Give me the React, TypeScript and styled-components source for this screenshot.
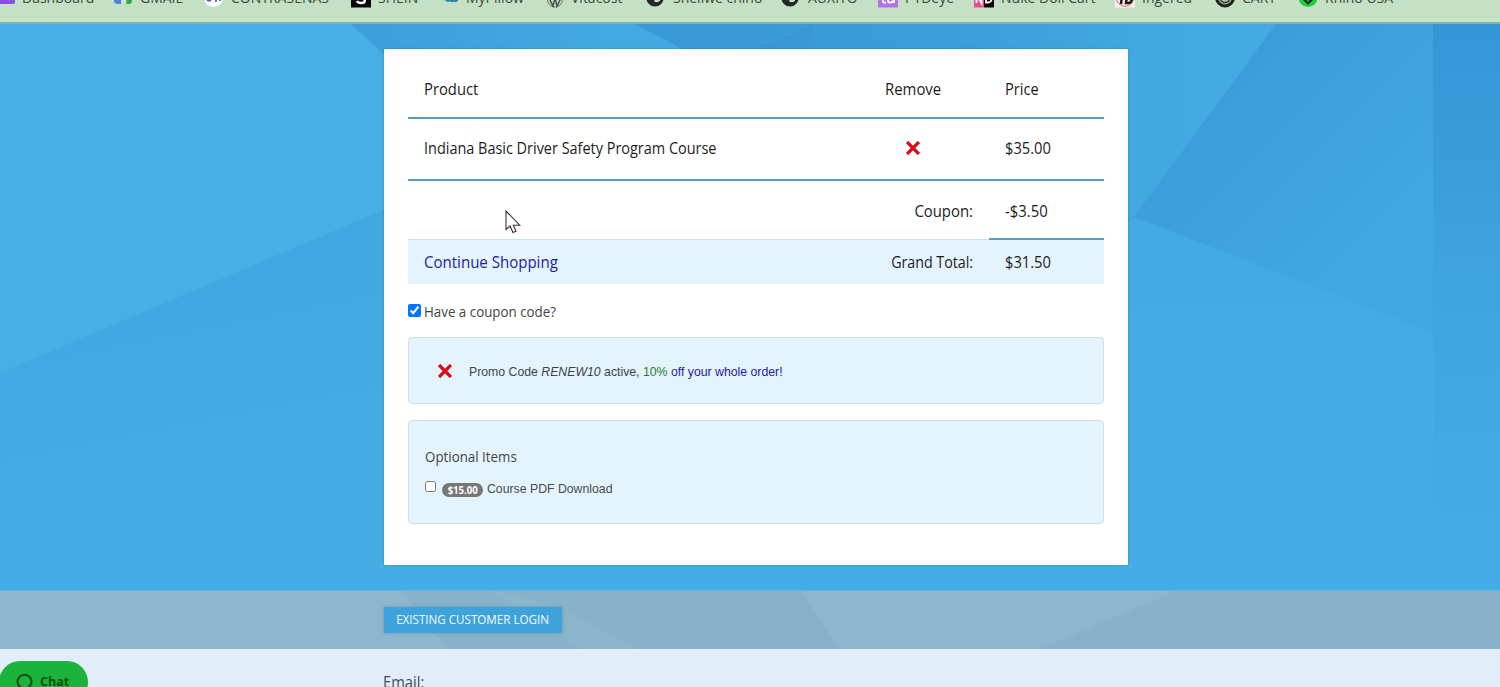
import React from "react";
import styled, { createGlobalStyle } from "styled-components";

const GlobalStyle = createGlobalStyle`
  * { box-sizing: border-box; }
  body {
    margin: 0;
    overflow: hidden;
    font-family: "Open Sans", "Noto Sans", sans-serif;
    color: #1c1c1c;
  }
`;

const Page = styled.div`
  position: relative;
  display: flex;
  flex-direction: column;
  height: 687px;
  overflow: hidden;
  background: #e1edf7;
`;

const Narrow = styled.span<{ $scale: number; $from?: "left" | "right" | "center" }>`
  display: inline-block;
  white-space: pre;
  transform: scaleX(${(p) => p.$scale});
  transform-origin: ${(p) => p.$from ?? "left"} center;
`;

const BookmarkBar = styled.nav`
  flex: none;
  height: 24px;
  overflow: hidden;
  background: linear-gradient(#c5e1c5 0 17px, #c1ddbd 17px 18px, #c6e3c3 18px);
  border-bottom: 2px solid #84b4a6;
`;

const BookmarkList = styled.div`
  display: flex;
  height: 20px;
  margin: -13px 0 0 -5px;
`;

const Bookmark = styled.a<{ $slot: number }>`
  flex: none;
  display: flex;
  gap: 7px;
  width: ${(p) => p.$slot}px;
  font-size: 14px;
  line-height: 21px;
  white-space: nowrap;
  color: #3a4a3c;

  svg { flex: none; overflow: visible; }
`;

const Hero = styled.section`
  position: relative;
  flex: none;
  display: flex;
  justify-content: center;
  height: 566px;
  padding: 25px 0 25px 12px;
`;

const Backdrop = styled.svg`
  position: absolute;
  inset: 0;
  width: 100%;
  height: 100%;
`;

const Card = styled.main`
  position: relative;
  width: 744px;
  height: 516px;
  padding: 10px 24px 0;
  background: #fff;
  box-shadow: 0 0 2px rgba(40, 120, 160, 0.7);
`;

const CartRow = styled.div<{ $height: number; $shift: number }>`
  display: grid;
  grid-template-columns: 461px 120px 115px;
  align-items: center;
  height: ${(p) => p.$height}px;
  padding-top: ${(p) => Math.max(p.$shift, 0)}px;
  padding-bottom: ${(p) => Math.max(-p.$shift, 0)}px;
  border-bottom: 2px solid #559fb8;
`;

const SummaryRow = styled.div<{ $height: number; $tinted?: boolean }>`
  display: grid;
  grid-template-columns: 1fr auto 115px;
  height: ${(p) => p.$height}px;
  background: ${(p) => (p.$tinted ? "#e4f4fd" : "#fff")};
  box-shadow: ${(p) => (p.$tinted ? "0 -1px #d3dfe4" : "none")};
`;

const Cell = styled.div<{ $ruled?: boolean }>`
  position: relative;
  display: flex;
  align-items: center;
  padding: 0 16px;
  font-size: 16px;
  line-height: 22px;
  white-space: nowrap;
  border-bottom: 2px solid ${(p) => (p.$ruled ? "#4ba0c6" : "transparent")};
`;

const TotalCell = styled(Cell)`
  padding-top: 2px;
`;

const RemoveButton = styled.button<{ $indent: number }>`
  display: flex;
  margin: 1px 0 0 ${(p) => p.$indent}px;
  padding: 0;
  border: 0;
  background: none;
`;

const ShopLink = styled.a`
  color: #2620a6;
`;

const CouponToggle = styled.label`
  display: flex;
  align-items: center;
  gap: 3px;
  margin: 16px 0 15px;
  height: 23px;
  font-size: 14.5px;
  line-height: 22px;
  color: #444;
`;

const Checkbox = styled.input<{ $size: number; $lift: number }>`
  flex: none;
  width: ${(p) => p.$size}px;
  height: ${(p) => p.$size}px;
  margin: 0 0 ${(p) => p.$lift}px;
`;

const Panel = styled.section<{ $height: number }>`
  height: ${(p) => p.$height}px;
  margin: -1px 0 17px;
  padding: 0 16px;
  background: #e4f4fd;
  border: 1px solid #cfdfe6;
  border-radius: 4px;
`;

const PromoLine = styled.div`
  display: flex;
  align-items: center;
  height: 100%;
  font: 13px/18px "Liberation Sans", Arial, sans-serif;
  color: #3c4448;
`;

const PromoText = styled.span`
  margin: 3px 0 0 17px;
`;

const Percent = styled.span`
  color: #1f7f2a;
`;

const Offer = styled.span`
  color: #2620a6;
`;

const OptionalTitle = styled.h2`
  margin: 25px 0 10px;
  font-size: 14.5px;
  line-height: 22px;
  font-weight: 400;
  color: #444;
`;

const OptionLine = styled.label`
  display: flex;
  align-items: center;
  height: 22px;
  font: 13px/18px "Liberation Sans", Arial, sans-serif;
  color: #454b4f;
`;

const PriceBadge = styled.span`
  display: flex;
  justify-content: center;
  margin: 2px 4px 0 6px;
  width: 41px;
  height: 14px;
  border-radius: 7px;
  background: #777;
  color: #fff;
  font: 700 10px/14px "Open Sans", sans-serif;
`;

const LoginBand = styled.section`
  position: relative;
  flex: none;
  height: 59px;
  padding: 17px 0 0 384px;
`;

const LoginButton = styled.button`
  position: relative;
  display: flex;
  align-items: center;
  justify-content: center;
  width: 178px;
  height: 26px;
  padding: 0 0 2px;
  border: 0;
  background: #3fa3db;
  box-shadow: 0 0 3px rgba(70, 130, 160, 0.6);
  color: #f4fbff;
  font-family: "Open Sans", sans-serif;
  font-size: 13px;
  font-weight: 500;
  white-space: nowrap;
`;

const LoginForm = styled.form`
  padding: 22px 0 0 383px;
  font-size: 16px;
  line-height: 22px;
  color: #444c54;
`;

const ChatButton = styled.button`
  position: absolute;
  left: -1px;
  top: 661px;
  display: flex;
  align-items: center;
  gap: 7px;
  width: 89px;
  height: 42px;
  padding: 0 0 1px 17px;
  border: 0;
  border-radius: 21px;
  background: #1bb33c;
  color: #07520f;
  font: 700 12.5px/18px "Open Sans", sans-serif;
`;

const Pointer = styled.svg`
  position: absolute;
  left: 505px;
  top: 210px;
`;

const CrossIcon = () => (
  <svg width="14" height="14" viewBox="0 0 14 14">
    <path d="M2.2 2.2 11.8 11.8M11.8 2.2 2.2 11.8" stroke="#d90b14" strokeWidth="3.3" strokeLinecap="square" />
  </svg>
);

const Globe = () => (
  <>
    <circle cx="9" cy="11" r="8.6" fill="#222b25" />
    <path d="M9 9c3 0 6 0 5.500 3s-3 3.500-5 3-1.500-2 0-2.500 1-2-.500-3.500z" fill="#c9e3c9" />
  </>
);

const bookmarks: { label: string; slot: number; icon: React.ReactNode }[] = [
  { label: "Dashboard", slot: 118, icon: <rect width="20" height="17" rx="2" fill="#8d4fe0" /> },
  {
    label: "GMAIL",
    slot: 91,
    icon: (
      <>
        <path d="M1 2h7v15H3.500L1 15z" fill="#4a82dd" />
        <path d="M8 5l3 6 2-4v5l-2 3-3-3z" fill="#e6eee6" />
        <path d="M13.500 2h5.500v13l-2 2h-3.500z" fill="#34a455" />
      </>
    ),
  },
  {
    label: "CONTRASENAS",
    slot: 147,
    icon: (
      <>
        <circle cx="9.500" cy="10.500" r="9.500" fill="#fff" />
        <circle cx="5" cy="12" r="2.800" fill="#5068c0" />
        <path d="M12 10v5M16 10v4" stroke="#5c7ac4" strokeWidth="2" />
      </>
    ),
  },
  {
    label: "SHEIN",
    slot: 88,
    icon: (
      <>
        <path d="M0 0h20v20.500H0z" fill="#050505" />
        <path d="M14 5c-5-3-9 3-4 5s5 6 0 6q-3 0-4-2" fill="none" stroke="#fff" strokeWidth="2.500" />
      </>
    ),
  },
  { label: "MyPillow", slot: 105, icon: <path d="M6 10h13v4q-2 2-4 .500-2 1.500-4 0-4 1-5-1.500z" fill="#2d83a8" /> },
  {
    label: "Vitacost",
    slot: 102,
    icon: (
      <>
        <circle cx="11" cy="12.500" r="7.500" fill="none" stroke="#66786a" />
        <path d="M5 11l4 8 2-8 2 8 4-8" fill="none" stroke="#435447" strokeWidth="1.500" />
      </>
    ),
  },
  { label: "Shellwe chino", slot: 135, icon: <Globe /> },
  { label: "AUXITO", slot: 97, icon: <Globe /> },
  {
    label: "PTDeye",
    slot: 96,
    icon: (
      <>
        <path d="M0 0h20v20.500H0z" fill="#b673e4" />
        <path d="M5 9v5q0 2 3 1.700" fill="none" stroke="#fff" strokeWidth="1.800" />
        <circle cx="12.500" cy="13" r="2.700" fill="none" stroke="#fff" strokeWidth="1.800" />
        <path d="M16 9v7" stroke="#fff" strokeWidth="1.800" />
      </>
    ),
  },
  {
    label: "Nuke Doll Cart",
    slot: 141,
    icon: (
      <>
        <path d="M0 0h10v20.500H0z" fill="#f2498e" />
        <path d="M10 0h10v20.500H10z" fill="#090609" />
        <path d="M2.500 16V8l5 8V8" fill="none" stroke="#fff" strokeWidth="1.800" />
        <path d="M12 8v7.500h2q4-.500 3.500-4" fill="none" stroke="#fff" strokeWidth="1.800" />
      </>
    ),
  },
  {
    label: "Ingered",
    slot: 100,
    icon: (
      <>
        <path d="M0 0h20v20.500H0z" fill="#f6efeb" />
        <circle cx="10" cy="10.500" r="8.800" fill="none" stroke="#d56460" />
        <path d="M7 9l-1 8M12 9l-1 7h3q3-1 3-5" fill="none" stroke="#1c1718" strokeWidth="2.500" />
      </>
    ),
  },
  {
    label: "CART",
    slot: 83,
    icon: (
      <>
        <circle cx="10" cy="10.500" r="8.500" fill="#9ba895" stroke="#20241f" strokeWidth="3" />
        <circle cx="10" cy="11" r="4.500" fill="#b9c7b3" stroke="#3b4039" strokeWidth="1.500" />
      </>
    ),
  },
  {
    label: "Rhino USA",
    slot: 100,
    icon: (
      <>
        <circle cx="10" cy="10.500" r="9.500" fill="#20cf3e" />
        <path d="M5 8h10v5l-5 5-5-5z" fill="#12351b" />
        <path d="M8 12l2 3 3-4z" fill="#6d9a78" />
      </>
    ),
  },
];

const HeroFacets = () => (
  <Backdrop viewBox="0 24 1500 566" preserveAspectRatio="none">
    <defs>
      <linearGradient id="lower" gradientUnits="userSpaceOnUse" x1="280" y1="230" x2="330" y2="480">
        <stop offset="0" stopColor="#40a7e1" />
        <stop offset="1" stopColor="#45ade5" />
      </linearGradient>
      <linearGradient id="upper" x1="0" x2="1" y1="0" y2="0">
        <stop offset="0" stopColor="#3d9edb" />
        <stop offset=".75" stopColor="#43a9e2" />
      </linearGradient>
      <linearGradient id="crown" gradientUnits="userSpaceOnUse" x1="640" x2="1210" y1="0" y2="0">
        <stop offset="0" stopColor="#3998d7" />
        <stop offset=".5" stopColor="#3b9dda" />
        <stop offset="1" stopColor="#43abe1" />
      </linearGradient>
      <linearGradient id="wing" gradientUnits="userSpaceOnUse" x1="1190" y1="90" x2="1350" y2="250">
        <stop offset="0" stopColor="#3b9cda" />
        <stop offset="1" stopColor="#40a7e0" />
      </linearGradient>
      <linearGradient id="edge" x1="0" x2="0" y1="0" y2="1">
        <stop offset="0" stopColor="#3596d5" />
        <stop offset=".5" stopColor="#3fa5df" />
        <stop offset="1" stopColor="#45ade5" />
      </linearGradient>
      <linearGradient id="base" x1="0" x2="0" y1="0" y2="1">
        <stop offset="0" stopColor="#40a6e0" />
        <stop offset=".65" stopColor="#44ade5" />
        <stop offset="1" stopColor="#45ade5" />
      </linearGradient>
    </defs>
    <rect y="24" width="1500" height="566" fill="url(#base)" />
    <path d="M0 24H400V203L0 373z" fill="#47afe5" />
    <path d="M0 373 400 203V590H0z" fill="url(#lower)" />
    <path d="M351 24H640L700 60H390z" fill="url(#upper)" />
    <path d="M635 24H1275L1136 216 1120 230V60H703z" fill="url(#crown)" />
    <path d="M760 49 815 24 807 49z" fill="#3696d4" opacity=".5" />
    <path d="M1276 24H1433V333L1134 217z" fill="url(#wing)" />
    <path d="M1433 24H1500V590H1433z" fill="url(#edge)" />
  </Backdrop>
);

const BandFacets = () => (
  <Backdrop viewBox="0 590 1500 59" preserveAspectRatio="none">
    <rect y="590" width="1500" height="59" fill="#8eb7cd" />
    <path d="M400 590H800L840 649H447z" fill="#87b2c9" />
    <path d="M490 590 560 607 638 649H580z" fill="#8bb5ca" />
    <path d="M1178 590H1500V649H1040z" fill="#87b2ca" />
    <path d="M0 590H1500" stroke="#75b4d8" strokeWidth="2" />
  </Backdrop>
);

export default function App() {
  return (
    <Page>
      <GlobalStyle />
      <BookmarkBar>
        <BookmarkList>
          {bookmarks.map((b) => (
            <Bookmark key={b.label} $slot={b.slot}>
              <svg width="20" height="20">{b.icon}</svg>
              {b.label}
            </Bookmark>
          ))}
        </BookmarkList>
      </BookmarkBar>

      <Hero>
        <HeroFacets />
        <Card>
          <CartRow $height={60} $shift={3}>
            <Cell><Narrow $scale={0.925}>Product</Narrow></Cell>
            <Cell><Narrow $scale={0.932}>Remove</Narrow></Cell>
            <Cell><Narrow $scale={0.918}>Price</Narrow></Cell>
          </CartRow>
          <CartRow $height={62} $shift={-1}>
            <Cell><Narrow $scale={0.903}>Indiana Basic Driver Safety Program Course</Narrow></Cell>
            <Cell>
              <RemoveButton $indent={21} aria-label="Remove course"><CrossIcon /></RemoveButton>
            </Cell>
            <Cell><Narrow $scale={0.918}>$35.00</Narrow></Cell>
          </CartRow>
          <SummaryRow $height={59}>
            <Cell />
            <TotalCell><Narrow $scale={0.93} $from="right">Coupon:</Narrow></TotalCell>
            <TotalCell $ruled><Narrow $scale={0.93}>-$3.50</Narrow></TotalCell>
          </SummaryRow>
          <SummaryRow $height={44} $tinted>
            <TotalCell><ShopLink><Narrow $scale={0.94}>Continue Shopping</Narrow></ShopLink></TotalCell>
            <TotalCell><Narrow $scale={0.89} $from="right">Grand Total:</Narrow></TotalCell>
            <TotalCell><Narrow $scale={0.918}>$31.50</Narrow></TotalCell>
          </SummaryRow>

          <CouponToggle>
            <Checkbox $size={13} $lift={3} type="checkbox" defaultChecked />
            <Narrow $scale={0.92}>Have a coupon code?</Narrow>
          </CouponToggle>

          <Panel $height={67}>
            <PromoLine>
              <RemoveButton $indent={13} aria-label="Remove promo code"><CrossIcon /></RemoveButton>
              <PromoText>
                <Narrow $scale={0.944}>
                  Promo Code <em>RENEW10</em> active, <Percent>10%</Percent> <Offer>off your whole order!</Offer>
                </Narrow>
              </PromoText>
            </PromoLine>
          </Panel>

          <Panel $height={104}>
            <OptionalTitle><Narrow $scale={0.92}>Optional Items</Narrow></OptionalTitle>
            <OptionLine>
              <Checkbox $size={11} $lift={5} type="checkbox" />
              <PriceBadge><Narrow $scale={0.96} $from="center">$15.00</Narrow></PriceBadge>
              <Narrow $scale={0.944}>Course PDF Download</Narrow>
            </OptionLine>
          </Panel>
        </Card>
      </Hero>

      <LoginBand>
        <BandFacets />
        <LoginButton><Narrow $scale={0.893} $from="center">EXISTING CUSTOMER LOGIN</Narrow></LoginButton>
      </LoginBand>
      <LoginForm>
        <label><Narrow $scale={0.92}>Email:</Narrow></label>
      </LoginForm>

      <ChatButton>
        <svg width="17" height="17" viewBox="0 0 17 17">
          <path d="M5 14.500a7 6.800 0 1 1 7 0l-1.500 1.500-1.500-1H6.500z" fill="none" stroke="#07520f" strokeWidth="2" />
        </svg>
        Chat
      </ChatButton>

      <Pointer width="17" height="25" viewBox="0 0 17 25">
        <path
          d="M1 1V19.500L5 16 8 22.500 11 21.200 8.300 15.200H14.700z"
          fill="#fff"
          stroke="#333"
          strokeWidth="1.100"
        />
      </Pointer>
    </Page>
  );
}
